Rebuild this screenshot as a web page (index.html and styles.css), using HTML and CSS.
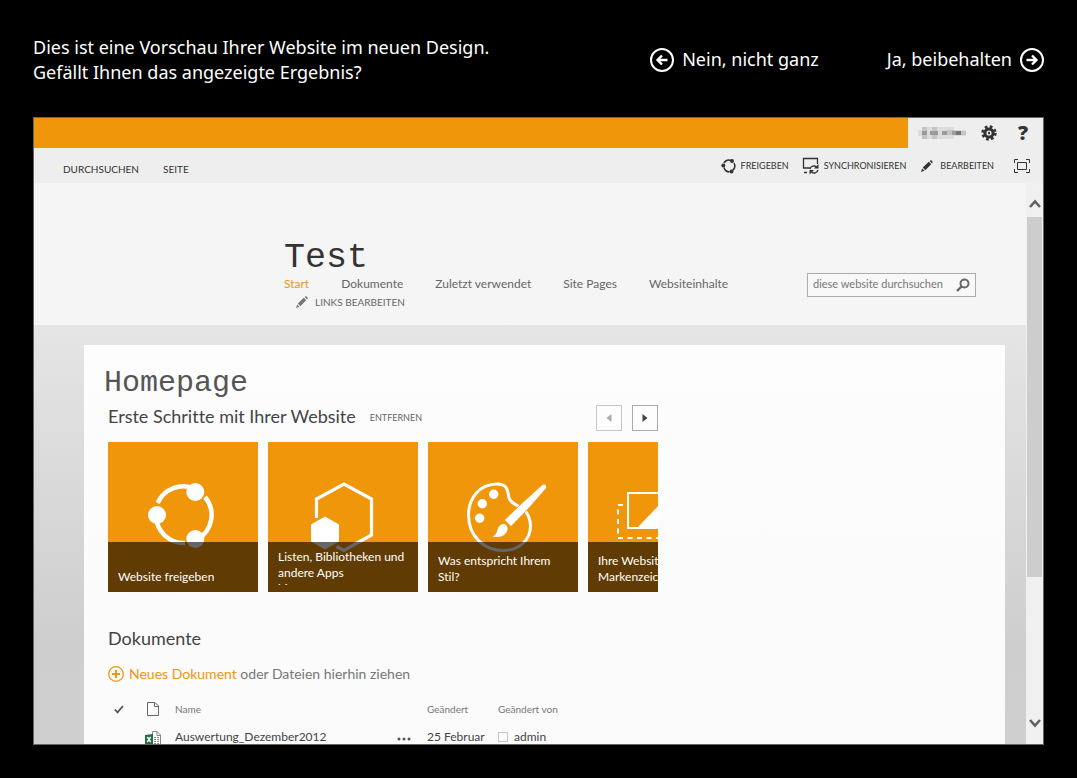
FILE: index.html
```
<!DOCTYPE html>
<html lang="de">
<head>
<meta charset="utf-8">
<title>Vorschau</title>
<link rel="stylesheet" href="styles.css">
</head>
<body>
<header class="banner">
  <p class="question">Dies ist eine Vorschau Ihrer Website im neuen Design.<br>Gefällt Ihnen das angezeigte Ergebnis?</p>
  <div class="choices">
    <button class="choice" type="button">
      <svg width="24" height="24" viewBox="0 0 24 24"><circle cx="12" cy="12" r="11" class="ring"/><path d="M7 12H17.500M12 7.500L7.500 12L12 16.500" class="arrow"/></svg>
      Nein, nicht ganz
    </button>
    <button class="choice" type="button">
      Ja, beibehalten
      <svg width="24" height="24" viewBox="0 0 24 24"><circle cx="12" cy="12" r="11" class="ring"/><path d="M6.500 12H17M12 7.500L16.500 12L12 16.500" class="arrow"/></svg>
    </button>
  </div>
</header>

<main class="frame">
  <div class="suite">
    <div class="suite-bar"></div>
    <div class="suite-tools">
      <svg class="user" width="48" height="12" viewBox="0 0 48 12">
        <path fill="#dcdcdc" d="M0 3h4v6H0zM4 0h32v12H4zM36 3h12v6H36z"/>
        <path fill="#c4c4c4" d="M4 0h5v12H4zM14 0h5v12h-5zM29 3h8v5h-8zM43 4h5v4h-5z"/>
        <path fill="#9a9a9a" d="M4 4h5v4H4zM12 4h8v4h-8zM24 4h5v4h-5zM34 4h4v4h-4z"/>
        <path fill="#767676" d="M38 4h5v4h-5z"/>
      </svg>
      <button class="icon-button" type="button" aria-label="Einstellungen">
        <svg width="16" height="16" viewBox="0 0 16 16"><circle cx="8" cy="8" r="6.200" fill="none" stroke="#333" stroke-width="3" stroke-dasharray="2.600 2.270"/><circle cx="8" cy="8" r="4.100" fill="none" stroke="#333" stroke-width="3"/><circle cx="8" cy="8" r="1.200" fill="#333"/></svg>
      </button>
      <button class="icon-button help" type="button" aria-label="Hilfe">?</button>
    </div>
  </div>

  <div class="ribbon">
    <nav class="tabs"><a href="#">DURCHSUCHEN</a><a href="#">SEITE</a></nav>
    <div class="actions">
      <button type="button" class="action"><svg width="16" height="16" viewBox="0 0 16 16"><g fill="none" stroke="#333" stroke-width="1.500"><path d="M3 5A6 6 0 0 1 10 2.500M13 5A6 6 0 0 1 11.500 12.500M8.500 14A6 6 0 0 1 3 9.500"/></g><circle cx="11" cy="3" r="2" fill="#333"/><circle cx="2.300" cy="7.500" r="2" fill="#333"/><circle cx="10.500" cy="13.500" r="2" fill="#333"/></svg>FREIGEBEN</button>
      <button type="button" class="action sync"><svg width="18" height="18" viewBox="0 0 18 18"><g fill="none" stroke="#333" stroke-width="1.300"><path d="M8 11H1.500V1.500H15.500V7M2 15.500H5"/><path d="M8 12A4 4 0 0 1 14.500 10M16 13A4 4 0 0 1 9.500 15"/></g><path fill="#333" d="M16.500 7v4.500h-4.500zM7.500 17.500v-4.500H12z"/></svg>SYNCHRONISIEREN</button>
      <button type="button" class="action edit"><svg width="12" height="12" viewBox="0 0 12 12"><path fill="#333" d="M0 12L1.200 8.500L3.500 10.800zM1.800 7.600L7.800 1.800L10.200 4.200L4.300 10.200zM8.600 1L9.600 0.300Q11.500 0.300 11.700 2.300L11 3.400z"/></svg>BEARBEITEN</button>
      <button type="button" class="icon-button" aria-label="Vollbild"><svg width="16" height="14" viewBox="0 0 16 14"><path fill="none" stroke="#333" d="M3.500 3.500H12.500V10.500H3.500zM.5 4V.5H4M12 .5H15.500V4M15.500 10V13.500H12M4 13.500H.5V10"/></svg></button>
    </div>
  </div>

  <div class="viewport">
    <div class="site">
      <header class="site-head">
        <div>
          <h1>Test</h1>
          <nav class="site-nav"><a class="current" href="#">Start</a><a href="#">Dokumente</a><a href="#">Zuletzt verwendet</a><a href="#">Site Pages</a><a href="#">Websiteinhalte</a></nav>
          <a class="edit-links" href="#"><svg width="12" height="12" viewBox="0 0 12 12"><path fill="#777" d="M0 12L1.200 8.500L3.500 10.800zM1.800 7.600L7.800 1.800L10.200 4.200L4.300 10.200zM8.600 1L9.600 0.300Q11.500 0.300 11.700 2.300L11 3.400z"/></svg>LINKS BEARBEITEN</a>
        </div>
        <form class="search">
          <input type="text" aria-label="Website durchsuchen" placeholder="diese website durchsuchen">
          <button type="button" aria-label="Suchen"><svg width="14" height="14" viewBox="0 0 14 14"><g fill="none" stroke="#666"><circle cx="8.500" cy="5.500" r="4" stroke-width="2"/><path d="M5.500 8.500L1 13" stroke-width="2.400"/></g></svg></button>
        </form>
      </header>

      <section class="card">
        <h2 class="page-title">Homepage</h2>
        <div class="content">
          <div class="steps-head">
            <h3>Erste Schritte mit Ihrer Website</h3>
            <a class="remove" href="#">ENTFERNEN</a>
            <div class="pager">
              <button type="button" disabled aria-label="Zurück"><svg width="6" height="8" viewBox="0 0 6 8"><path fill="#aaa" d="M5.500 0V8L0.500 4z"/></svg></button>
              <button type="button" aria-label="Weiter"><svg width="6" height="8" viewBox="0 0 6 8"><path fill="#444" d="M.5 0V8L5.500 4z"/></svg></button>
            </div>
          </div>

          <div class="tiles">
            <a class="tile" href="#">
              <svg viewBox="0 0 150 150"><g fill="none" stroke="#fff" stroke-width="4.500"><path d="M49.700 61A28 28 0 0 1 87 47M97 55A28 28 0 0 1 90 97M77 101A28 28 0 0 1 48 75"/></g><g fill="#fff"><circle cx="87.300" cy="50" r="9"/><circle cx="49" cy="73" r="9"/><circle cx="87.300" cy="97" r="9"/></g></svg>
              <span class="caption"><span>Website freigeben</span></span>
            </a>
            <a class="tile" href="#">
              <svg viewBox="0 0 150 150"><path fill="none" stroke="#fff" stroke-width="3.200" d="M48.500 76V57L76 42L103.500 57V93L76 108.500L68.500 104.500"/><path fill="#fff" d="M57 74.500L71 82.500V99.500L57 107.500L43 99.500V82.500z"/></svg>
              <span class="caption"><span>Listen, Bibliotheken und andere Apps<br>hinzufügen</span></span>
            </a>
            <a class="tile" href="#">
              <svg viewBox="0 0 150 150"><path fill="none" stroke="#fff" stroke-width="3" d="M69 42C51 42 40.500 57 40.500 73C40.500 94 56 108.500 75 108.500C91 108.500 102.500 98 102.500 84C102.500 77 99 70 94 66C89 63 84 62 81.500 57C79 52 82 42 69 42z"/><g fill="#fff"><circle cx="65.700" cy="52.300" r="4.700"/><circle cx="54.300" cy="61.700" r="4.700"/><circle cx="51.700" cy="76.300" r="4.700"/></g><path fill="#fff" stroke="#f0960b" stroke-width=".8" d="M76.500 78L93 62L114.500 42.500Q119 41 118.500 46L101 66L83 84.500z"/><path fill="#fff" d="M64.500 94.500Q68.500 93 69.500 87.500Q71 82 76 82Q80 83 79.500 88Q76.500 97 64.500 94.500z"/></svg>
              <span class="caption"><span>Was entspricht Ihrem Stil?</span></span>
            </a>
            <a class="tile" href="#">
              <svg viewBox="0 0 150 150"><g fill="none" stroke="#fff" stroke-width="2"><path d="M40 51H112V86H40z"/><path stroke-dasharray="5 4.500" d="M35 63H30V96H104"/></g><path fill="#fff" d="M49 86L75 59L100 86z"/></svg>
              <span class="caption"><span>Ihre Website. Ihr Markenzeichen.</span></span>
            </a>
          </div>

          <h3 class="docs-title">Dokumente</h3>
          <p class="new-doc"><svg width="16" height="16" viewBox="0 0 16 16"><g fill="none" stroke="#f0960b"><circle cx="8" cy="8" r="7.300" stroke-width="1.300"/><path stroke-width="2" d="M8 4V12M4 8H12"/></g></svg><span><a href="#">Neues Dokument</a> oder Dateien hierhin ziehen</span></p>

          <table class="docs">
            <colgroup><col class="c-check"><col class="c-type"><col class="c-name"><col class="c-menu"><col class="c-date"><col class="c-by"></colgroup>
            <thead>
              <tr>
                <th><svg class="tick" width="10" height="9" viewBox="0 0 10 9"><path fill="none" stroke="#555" stroke-width="1.800" d="M.8 4.500L3.500 7.300L9 1"/></svg></th>
                <th><svg class="page" width="12" height="14" viewBox="0 0 12 14"><path fill="none" stroke="#666" d="M.5 .5H8L11.500 4V13.500H.5zM7.500 .5V4.500H11.500"/></svg></th>
                <th>Name</th><th></th><th>Geändert</th><th>Geändert von</th>
              </tr>
            </thead>
            <tbody>
              <tr>
                <td></td>
                <td><svg class="file" width="16" height="16" viewBox="0 0 16 16"><path fill="#fff" stroke="#888" d="M7.500 .5H12L15.500 4V15.500H7.500z"/><path fill="none" stroke="#888" d="M12 .5V4.500H15.500M9 6.500H11M12 6.500H14M9 8.500H11M12 8.500H14M9 10.500H11M12 10.500H14M9 12.500H11M12 12.500H14"/><path fill="#1e7145" d="M0 4L8 3V14L0 13z"/><path fill="none" stroke="#fff" stroke-width="1.400" d="M2.300 6L5.700 11M5.700 6L2.300 11"/></svg></td>
                <td><a href="#">Auswertung_Dezember2012</a></td>
                <td><button class="dots" type="button" aria-label="Menü öffnen"><svg width="14" height="4" viewBox="0 0 14 4"><g fill="#555"><circle cx="2" cy="2" r="1.500"/><circle cx="7" cy="2" r="1.500"/><circle cx="12" cy="2" r="1.500"/></g></svg></button></td>
                <td>25 Februar</td>
                <td><span class="presence"></span>admin</td>
              </tr>
            </tbody>
          </table>
        </div>
      </section>
    </div>
    <div class="scrollbar">
      <svg width="12" height="10" viewBox="0 0 12 10"><path fill="none" stroke="#606060" stroke-width="2.600" d="M1 8L6 2.500L11 8"/></svg>
      <div class="track"><div class="thumb"></div></div>
      <svg width="12" height="10" viewBox="0 0 12 10"><path fill="none" stroke="#606060" stroke-width="2.600" d="M1 2L6 7.500L11 2"/></svg>
    </div>
  </div>
</main>
</body>
</html>
```
FILE: styles.css
```
* { box-sizing: border-box; }
body {
  margin: 0;
  height: 100vh;
  display: flex;
  flex-direction: column;
  padding: 35px 33px 33px;
  background: #000;
  color: #444;
  font: 12px/18px Lato, "Open Sans", sans-serif;
  font-variant-ligatures: none;
}
h1, h2, h3, p { margin: 0; font-weight: 400; }
a { color: inherit; text-decoration: none; }
button { border: 0; padding: 0; background: none; color: inherit; font: inherit; cursor: pointer; }
svg { flex: none; display: block; }

.banner {
  display: flex;
  justify-content: space-between;
  margin-bottom: 32px;
  color: #fff;
  font: 18px/25px "Noto Sans", "Open Sans", sans-serif;
}
.choices { display: flex; align-items: flex-start; gap: 68px; padding-top: 12px; }
.choice { display: flex; align-items: center; gap: 8px; }
.ring { fill: none; stroke: #fff; stroke-width: 2; }
.arrow { fill: none; stroke: #fff; stroke-width: 2.4; }

.frame {
  flex: 1;
  min-height: 0;
  display: flex;
  flex-direction: column;
  overflow: hidden;
  border: 1px solid #666;
  background: #eee;
}
.suite { display: flex; height: 30px; flex: none; }
.suite-bar { flex: 1; background: #f0960b; }
.suite-tools { display: flex; align-items: center; padding: 0 15px 0 10px; gap: 15px; }
.icon-button { color: #333; }
.help { font: 800 20px/20px "Open Sans", sans-serif; width: 10px; margin-left: 6px; }

.ribbon {
  display: flex;
  justify-content: space-between;
  align-items: center;
  flex: none;
  height: 35px;
  padding: 0 13px 0 29px;
  color: #333;
}
.tabs { display: flex; gap: 24px; padding-top: 6px; font-size: 10px; }
.actions { display: flex; align-items: center; gap: 13px; font-size: 9px; }
.action { display: flex; align-items: center; gap: 4px; }
.edit { gap: 7px; margin: 0 7px 0 2px; }

.viewport { flex: 1; min-height: 0; display: flex; }
.site {
  flex: 1;
  overflow: hidden;
  background: linear-gradient(#e5e5e5 142px, #dedede 240px, #cecece 460px, #cfcfcf);
}
.site-head {
  display: flex;
  justify-content: space-between;
  align-items: flex-end;
  padding: 58px 50px 14px 250px;
  background: #f5f5f5;
  color: #666;
}
h1 { font: 35px/34px "Courier New", "Liberation Mono", monospace; color: #333; }
.site-nav { display: flex; gap: 32px; }
.current { color: #f0960b; }
.edit-links { display: flex; align-items: center; gap: 7px; padding-left: 12px; font-size: 10px; }
.search {
  display: flex;
  align-items: center;
  width: 169px;
  height: 24px;
  margin-bottom: 14px;
  padding: 0 5px;
  border: 1px solid #ababab;
  background: #f8f8f8;
}
.search input { flex: 1; min-width: 0; padding: 0 0 2px; border: 0; outline: 0; background: none; font: 11px/18px Lato, "Open Sans", sans-serif; color: #666; }
.search input::placeholder { color: #777; opacity: 1; }

.card { margin: 20px 21px 0 50px; padding: 20px; min-height: 480px; background: linear-gradient(#fdfdfd, #fafafa); }
.page-title { font: 30px/36px "Courier New", "Liberation Mono", monospace; color: #555; }
.content { padding-left: 4px; max-width: 554px; }
.steps-head { display: flex; align-items: flex-start; height: 26px; margin: 4px 0 11px; }
.steps-head h3, .docs-title { font-size: 18px; line-height: 22px; color: #444; }
.remove { margin-left: 14px; font-size: 9px; line-height: 26px; color: #666; }
.pager { display: flex; gap: 10px; margin-left: auto; }
.pager button { display: grid; place-items: center; width: 26px; height: 26px; border: 1px solid #ababab; background: #fdfdfd; }
.pager button:disabled { border-color: #c6c6c6; }

.tiles { display: flex; gap: 10px; overflow: hidden; }
.tile { position: relative; flex: none; width: 150px; height: 150px; background: #f0960b; color: #fff; }
.caption {
  position: absolute;
  inset: auto 0 0 0;
  display: flex;
  align-items: flex-end;
  height: 50px;
  padding: 0 5px 7px 10px;
  background: rgba(0, 0, 0, .6);
  line-height: 16px;
}
.caption span { max-height: 36px; overflow: hidden; }

.docs-title { margin-top: 35px; }
.new-doc { display: flex; align-items: center; gap: 5px; margin-top: 15px; font-size: 14px; line-height: 20px; color: #777; }
.new-doc a { color: #f0960b; }
.docs { width: 100%; margin-top: 11px; table-layout: fixed; border-collapse: collapse; }
.docs th, .docs td { height: 28px; padding: 0; text-align: left; vertical-align: middle; white-space: nowrap; }
.docs th { font-size: 10px; font-weight: 400; color: #777; }
.c-check { width: 37px; }
.c-type { width: 30px; }
.c-name { width: 222px; }
.c-menu { width: 30px; }
.c-date { width: 71px; }
.tick { margin-left: 6px; }
.page { margin-left: 2px; }
.file, .dots { margin-top: 3px; }
.presence { display: inline-block; width: 10px; height: 10px; margin-right: 6px; border: 1px solid #c6c6c6; vertical-align: -1px; }

.scrollbar { display: flex; flex-direction: column; align-items: center; flex: none; width: 17px; padding: 16px 0; background: #f0f0f0; }
.track { flex: 1; width: 100%; padding: 8px 1px; }
.thumb { height: 73%; background: #cdcdcd; }
```
